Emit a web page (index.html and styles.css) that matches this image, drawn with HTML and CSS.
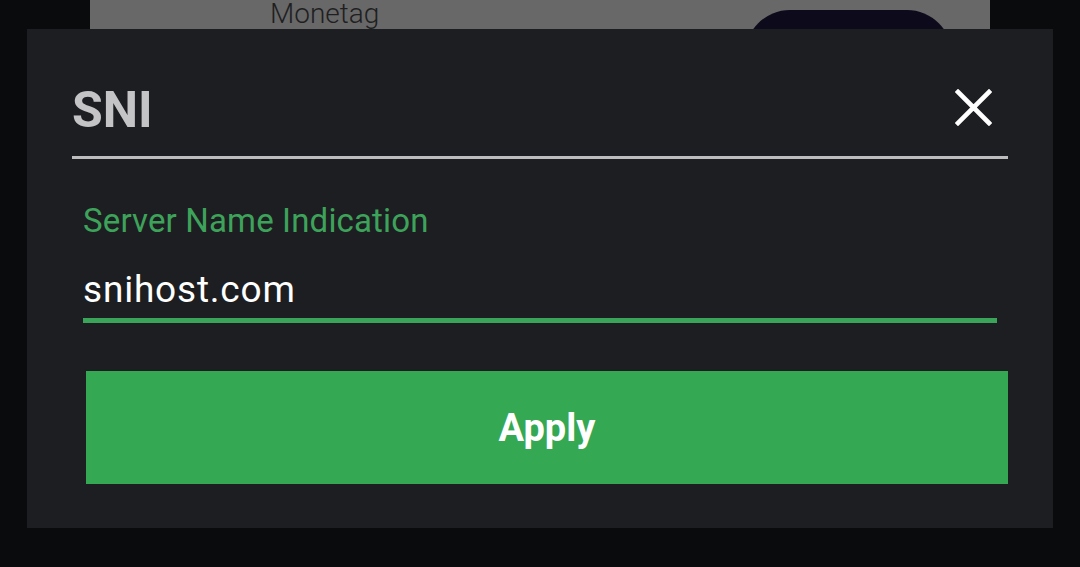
FILE: index.html
```html
<!DOCTYPE html>
<html lang="en">
<head>
<meta charset="utf-8">
<title>SNI</title>
<link rel="stylesheet" href="styles.css">
</head>
<body>
<div class="backdrop-card">
  <span class="brand">Monetag</span>
  <span class="pill"></span>
</div>
<div class="dialog">
  <div class="dialog-header">
    <h1 class="title">SNI</h1>
    <svg class="close" width="37" height="37" viewBox="0 0 37 37" aria-label="Close">
      <path d="M3 3 L34 34 M34 3 L3 34" stroke="#ffffff" stroke-width="4.6" stroke-linecap="square" fill="none"/>
    </svg>
  </div>
  <div class="divider"></div>
  <div class="field">
    <div class="field-label">Server Name Indication</div>
    <div class="field-value">snihost.com</div>
    <div class="field-underline"></div>
  </div>
  <div class="apply-btn">Apply</div>
</div>
</body>
</html>
```

FILE: styles.css
```css
html, body {
  margin: 0;
  padding: 0;
}
body {
  background: #0a0b0d;
  width: 1080px;
  height: 567px;
  overflow: hidden;
  font-family: Roboto, "Liberation Sans", sans-serif;
}
.backdrop-card {
  margin-left: 90px;
  width: 900px;
  height: 29px;
  background: #686868;
  display: flex;
  align-items: flex-start;
  overflow: hidden;
}
.brand {
  margin-left: 180px;
  font-size: 28px;
  font-weight: 300;
  line-height: 28px;
  color: #1f1f22;
  margin-top: 0;
}
.pill {
  margin-left: auto;
  margin-right: 38px;
  margin-top: 10px;
  width: 207px;
  height: 90px;
  border-radius: 60px;
  background: #0d0a1c;
  flex: none;
}
.dialog {
  margin-left: 27px;
  width: 1026px;
  height: 499px;
  box-sizing: border-box;
  background: #1d1e22;
  display: flex;
  flex-direction: column;
}
.dialog-header {
  display: flex;
  justify-content: space-between;
  align-items: flex-start;
  padding: 56px 61px 0 45px;
  height: 50px;
}
.title {
  margin: 0;
  font-size: 50px;
  line-height: 50px;
  font-weight: 700;
  color: #c4c4c6;
}
.close {
  margin-top: 4px;
  display: block;
}
.divider {
  margin: 21px 0 0 45px;
  width: 936px;
  height: 3px;
  background: #bdbdbd;
}
.field {
  margin-left: 56px;
  display: flex;
  flex-direction: column;
}
.field-label {
  margin-top: 42px;
  font-size: 33px;
  line-height: 40px;
  color: #3ea35a;
  letter-spacing: 0.15px;
}
.field-value {
  margin-top: 27px;
  font-size: 37px;
  line-height: 44px;
  color: #ffffff;
  letter-spacing: 0.8px;
}
.field-underline {
  margin-top: 6px;
  width: 914px;
  height: 5px;
  background: #3aa458;
}
.apply-btn {
  margin: 48px 0 0 59px;
  width: 922px;
  height: 113px;
  background: #34a853;
  color: #ffffff;
  font-size: 38px;
  font-weight: 700;
  display: flex;
  align-items: center;
  justify-content: center;
}
```
